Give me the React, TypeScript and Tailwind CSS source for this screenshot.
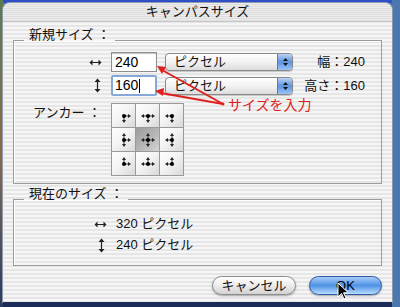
import React from "react";

const stripes =
  "bg-[repeating-linear-gradient(to_bottom,#f6f6f6_0px,#f6f6f6_2px,#e6e6e6_2px,#e6e6e6_4px)]";
const font = "font-['Liberation_Sans','Noto_Sans_CJK_JP',sans-serif]";

function HArrow() {
  return (
    <svg width="13" height="7" viewBox="0 0 13 7">
      <path d="M1.5 3.5h10" stroke="#222" strokeWidth="1" />
      <path d="M0.5 3.5l3-3v6z M12.5 3.5l-3-3v6z" fill="#222" />
    </svg>
  );
}

function VArrow() {
  return (
    <svg width="7" height="15" viewBox="0 0 7 15">
      <path d="M3.5 1.5v12" stroke="#222" strokeWidth="1.2" />
      <path d="M3.5 0.5l-3 3.5h6z M3.5 14.5l-3-3.5h6z" fill="#222" />
    </svg>
  );
}

function Popup() {
  return (
    <div className="flex h-[18px] w-[128px] items-stretch overflow-hidden rounded-[4px] border border-[#8a8a8a] bg-gradient-to-b from-[#ffffff] via-[#f2f2f2] to-[#dcdcdc] shadow-[0_1px_1px_rgba(0,0,0,0.2)]">
      <span className="flex-1 pl-[8px] text-[13px] leading-[16px] text-[#111]">ピクセル</span>
      <span className="flex w-[15px] flex-col items-center justify-center gap-[2px] rounded-r-[3px] border-l border-[#5579b8] bg-gradient-to-b from-[#b9d3f4] via-[#5d93dc] to-[#9cc2f2]">
        <svg width="5" height="3" viewBox="0 0 5 3">
          <path d="M2.5 0L5 3H0z" fill="#111" />
        </svg>
        <svg width="5" height="3" viewBox="0 0 5 3">
          <path d="M0 0h5L2.5 3z" fill="#111" />
        </svg>
      </span>
    </div>
  );
}

const dirs: Record<string, [number, number]> = {
  u: [0, -1],
  d: [0, 1],
  l: [-1, 0],
  r: [1, 0],
};

function AnchorIcon({ ds }: { ds: string[] }) {
  return (
    <svg width="16" height="16" viewBox="0 0 16 16">
      {ds.map((k) => {
        const [dx, dy] = dirs[k];
        const ex = 8 + dx * 6;
        const ey = 8 + dy * 6;
        const px = -dy;
        const py = dx;
        return (
          <g key={k}>
            <path d={`M8 8L${8 + dx * 5} ${8 + dy * 5}`} stroke="#222" strokeWidth="0.9" />
            <path
              d={`M${ex + dx} ${ey + dy}L${ex - dx * 2 + px * 2} ${ey - dy * 2 + py * 2}L${ex - dx * 2 - px * 2} ${ey - dy * 2 - py * 2}z`}
              fill="#222"
            />
          </g>
        );
      })}
      <circle cx="8" cy="8" r="2" fill="#000" />
    </svg>
  );
}

const cells: string[][] = [
  ["r", "d"],
  ["l", "r", "d"],
  ["l", "d"],
  ["u", "r", "d"],
  ["u", "d", "l", "r"],
  ["u", "l", "d"],
  ["u", "r"],
  ["u", "l", "r"],
  ["u", "l"],
];

export default function App() {
  return (
    <div className={`relative h-[307px] w-[400px] overflow-hidden bg-[#4a78ae] ${font}`}>
      <div className="flex h-full">
        {/* desktop strip on the left */}
        <div className="w-[3px] bg-gradient-to-b from-[#5a7a50] via-[#8a6a48] to-[#2a3a60]" />
        <div className="flex w-[389px] flex-col">
          <div className="h-[3px] bg-[#2f4fc8]" />
          {/* window */}
          <div className={`flex h-[299px] flex-col rounded-t-[7px] ${stripes} shadow-[0_0_0_1px_#8d9aad]`}>
            <div className="flex h-[19px] items-center justify-center rounded-t-[7px] border-b border-[#c8c8c8] bg-[repeating-linear-gradient(to_bottom,#eeeeee_0px,#eeeeee_1px,#dcdcdc_1px,#dcdcdc_2px)] text-[13px] text-[#111]">
              キャンパスサイズ
            </div>

            <div className="flex flex-col px-[10px] pt-[10px]">
              <fieldset className="border border-[#9c9c9c] px-0 pb-[7px] pt-[4px] shadow-[inset_1px_1px_0_#ffffff]">
                <legend className="relative -top-[5px] ml-[10px] px-[5px] text-[13px] leading-[16px] text-[#111]">新規サイズ ：</legend>

                <div className="flex h-[20px] items-center">
                  <div className="flex w-[97px] justify-end pr-[9px]">
                    <HArrow />
                  </div>
                  <div className="h-[20px] w-[46px] border border-[#8e8e8e] bg-white pl-[3px] text-[14px] leading-[18px] text-[#000] shadow-[inset_0_1px_1px_rgba(0,0,0,0.25)]">
                    240
                  </div>
                  <div className="ml-[8px]">
                    <Popup />
                  </div>
                  <div className="flex-1 pr-[16px] text-right text-[13px] text-[#111]">幅：240</div>
                </div>

                <div className="mt-[3px] flex h-[21px] items-center">
                  <div className="flex w-[97px] justify-end pr-[10px]">
                    <VArrow />
                  </div>
                  <div className="flex h-[21px] w-[46px] items-center rounded-[2px] border-2 border-[#86a8d8] bg-white pl-[2px] text-[14px] leading-[17px] text-[#000]">
                    160<span className="ml-[1px] inline-block h-[14px] w-px bg-black" />
                  </div>
                  <div className="ml-[8px]">
                    <Popup />
                  </div>
                  <div className="flex-1 pr-[16px] text-right text-[13px] text-[#111]">高さ：160</div>
                </div>

                <div className="mt-[7px] flex items-start">
                  <div className="w-[97px] pr-[10px] pt-[2px] text-right text-[13px] leading-[16px] text-[#111]">アンカー ：</div>
                  <div className="grid grid-cols-[repeat(3,24px)] grid-rows-[repeat(3,24px)] border-l border-t border-[#9a9a9a]">
                    {cells.map((ds, i) => (
                      <div
                        key={i}
                        className={`flex items-center justify-center border-b border-r border-[#9a9a9a] ${
                          i === 4
                            ? "bg-gradient-to-br from-[#9c9c9c] via-[#b4b4b4] to-[#d4d4d4]"
                            : "bg-gradient-to-br from-[#ffffff] via-[#f2f2f2] to-[#d8d8d8]"
                        }`}
                      >
                        <AnchorIcon ds={ds} />
                      </div>
                    ))}
                  </div>
                </div>
              </fieldset>

              <fieldset className="mt-[7px] border border-[#9c9c9c] px-0 pb-[10px] pt-[7px] shadow-[inset_1px_1px_0_#ffffff]">
                <legend className="relative -top-[5px] ml-[10px] px-[5px] text-[13px] leading-[16px] text-[#111]">現在のサイズ ：</legend>
                <div className="flex h-[20px] items-center">
                  <div className="flex w-[94px] justify-end pr-[1px]">
                    <HArrow />
                  </div>
                  <span className="ml-[8px] text-[13px] text-[#111]">320 ピクセル</span>
                </div>
                <div className="mt-[1px] flex h-[20px] items-center">
                  <div className="flex w-[94px] justify-end pr-[3px]">
                    <VArrow />
                  </div>
                  <span className="ml-[8px] text-[13px] text-[#111]">240 ピクセル</span>
                </div>
              </fieldset>

              <div className="mt-[10px] flex justify-end gap-[13px]">
                <button className="flex h-[19px] w-[84px] items-center justify-center rounded-full border border-[#8c8c8c] bg-gradient-to-b from-[#ffffff] via-[#ececec] to-[#d2d2d2] text-[13px] text-[#111] shadow-[0_1px_2px_rgba(0,0,0,0.35)]">
                  キャンセル
                </button>
                <button className="flex h-[19px] w-[73px] items-center justify-center rounded-full border border-[#2d5aa8] bg-gradient-to-b from-[#a9cdf7] via-[#4f92e4] to-[#b8dcff] text-[13px] text-[#000] shadow-[0_1px_2px_rgba(0,0,0,0.35)]">
                  OK
                </button>
              </div>
            </div>
          </div>
          <div className="flex-1 bg-[#1c2c58]" />
        </div>
      </div>

      {/* red annotation */}
      <svg className="absolute left-0 top-0" width="400" height="307" viewBox="0 0 400 307">
        <path d="M223 104L162 70" stroke="#e0201c" strokeWidth="2" />
        <path d="M157 66l9 1l-4 7z" fill="#e0201c" />
        <path d="M223 104L161 93" stroke="#e0201c" strokeWidth="2" />
        <path d="M155 91l9-3l-1 8z" fill="#e0201c" />
        <circle cx="223" cy="104" r="1.5" fill="#e0201c" />
      </svg>
      <div className="absolute left-[228px] top-[97px] text-[14px] leading-[16px] text-[#e0201c]">サイズを入力</div>

      {/* mouse pointer */}
      <svg className="absolute left-[337px] top-[282px]" width="12" height="18" viewBox="0 0 12 18">
        <path d="M1 1v14l3.5-3.5l2.5 5.5l2-1l-2.5-5.2h4.8z" fill="#000" stroke="#fff" strokeWidth="1" />
      </svg>
    </div>
  );
}
